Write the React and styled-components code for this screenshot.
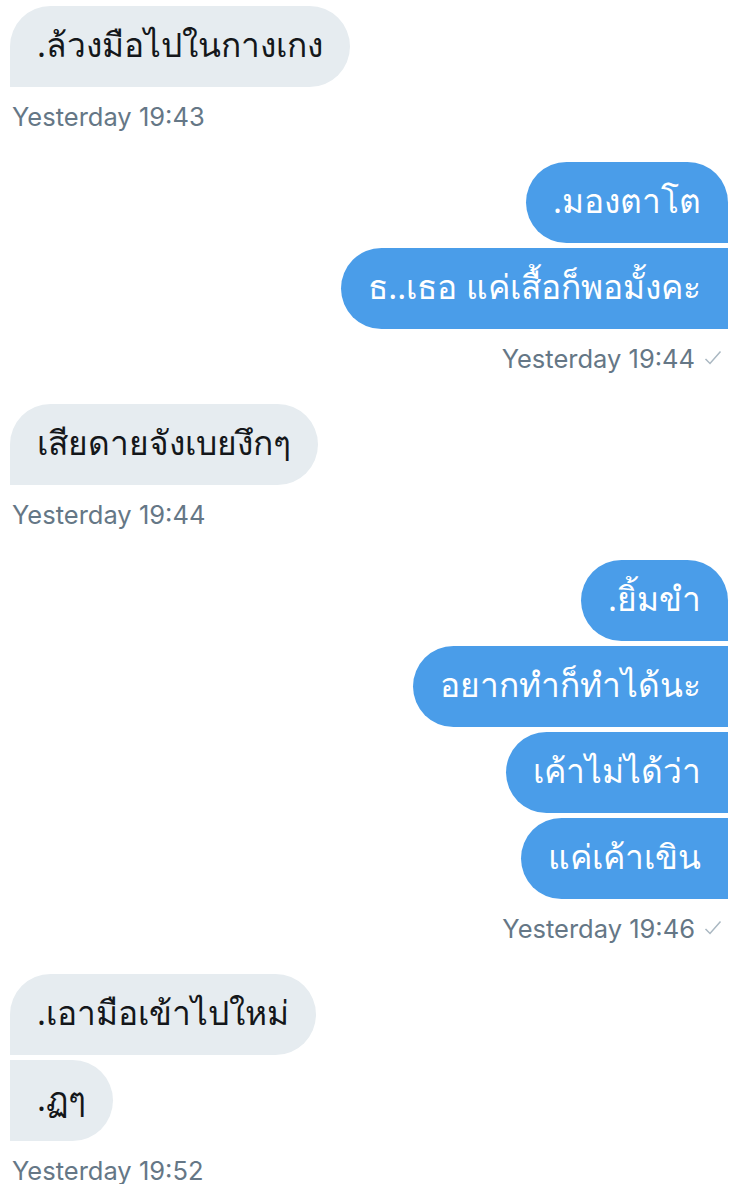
import React from 'react';
import styled, { createGlobalStyle } from 'styled-components';

const GlobalStyle = createGlobalStyle`
  body {
    margin: 0;
    background: #ffffff;
  }
`;

const Thread = styled.div`
  display: flex;
  flex-direction: column;
  gap: 32px;
  padding: 6px 8px 0 10px;
  width: 736px;
  box-sizing: border-box;
`;

const Group = styled.div`
  display: flex;
  flex-direction: column;
  align-items: ${props => (props.mine ? 'flex-end' : 'flex-start')};
`;

const Bubbles = styled.div`
  display: flex;
  flex-direction: column;
  align-items: ${props => (props.mine ? 'flex-end' : 'flex-start')};
  gap: 5px;
`;

const Bubble = styled.div`
  ${props => `
  background: ${props.mine ? '#4a9de9' : '#e6ecf0'};
  color: ${props.mine ? '#ffffff' : '#14171a'};
  border-radius: 41px;
  ${props.mine
    ? `border-top-right-radius: ${props.first ? 41 : 0}px; border-bottom-right-radius: 0;`
    : `border-top-left-radius: ${props.first ? 41 : 0}px; border-bottom-left-radius: 0;`}
  `}
  height: 81px;
  display: flex;
  align-items: center;
  padding: 0 27px 2px 27px;
  box-sizing: border-box;
  font-family: "Noto Sans", sans-serif;
  font-size: 33.5px;
  white-space: nowrap;
`;

const Meta = styled.div`
  display: flex;
  align-items: center;
  gap: 9px;
  margin-top: 15px;
  height: 28px;
  padding: ${props => (props.mine ? '0 6px 0 0' : '0 0 0 2px')};
  font-family: Inter, "Liberation Sans", sans-serif;
  font-size: 25.5px;
  color: #657786;
`;

const Check = () => (
  <svg width="18" height="18" viewBox="0 0 18 18">
    <path d="M1.5 10 L6 14.5 L16.5 2.5" fill="none" stroke="#aab8c2" strokeWidth="1.5" />
  </svg>
);

const groups = [
  { mine: false, time: 'Yesterday 19:43', texts: ['.ล้วงมือไปในกางเกง'] },
  { mine: true, time: 'Yesterday 19:44', texts: ['.มองตาโต', 'ธ..เธอ แค่เสื้อก็พอมั้งคะ'] },
  { mine: false, time: 'Yesterday 19:44', texts: ['เสียดายจังเบยงึกๆ'] },
  { mine: true, time: 'Yesterday 19:46', texts: ['.ยิ้มขำ', 'อยากทำก็ทำได้นะ', 'เค้าไม่ได้ว่า', 'แค่เค้าเขิน'] },
  { mine: false, time: 'Yesterday 19:52', texts: ['.เอามือเข้าไปใหม่', '.ฏๆ'] },
];

export default function App() {
  return (
    <>
      <GlobalStyle />
      <Thread>
        {groups.map((g, gi) => (
          <Group key={gi} mine={g.mine}>
            <Bubbles mine={g.mine}>
              {g.texts.map((t, i) => (
                <Bubble key={t} mine={g.mine} first={i === 0}>{t}</Bubble>
              ))}
            </Bubbles>
            <Meta mine={g.mine}>
              {g.time}
              {g.mine && <Check />}
            </Meta>
          </Group>
        ))}
      </Thread>
    </>
  );
}
